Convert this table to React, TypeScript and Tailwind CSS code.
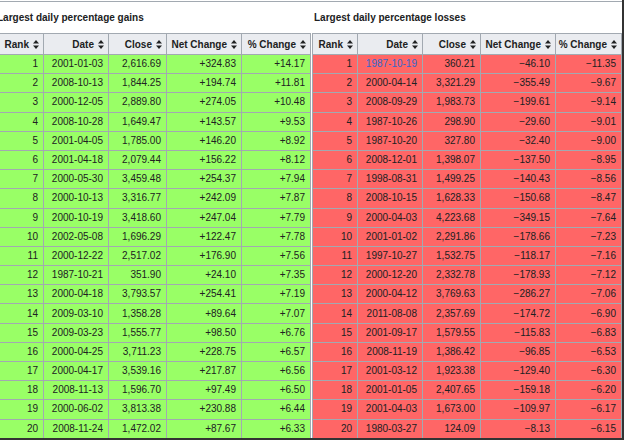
import React from "react";

type Row = [string, string, string, string, string];

const gains: Row[] = [
  ["1", "2001-01-03", "2,616.69", "+324.83", "+14.17"],
  ["2", "2008-10-13", "1,844.25", "+194.74", "+11.81"],
  ["3", "2000-12-05", "2,889.80", "+274.05", "+10.48"],
  ["4", "2008-10-28", "1,649.47", "+143.57", "+9.53"],
  ["5", "2001-04-05", "1,785.00", "+146.20", "+8.92"],
  ["6", "2001-04-18", "2,079.44", "+156.22", "+8.12"],
  ["7", "2000-05-30", "3,459.48", "+254.37", "+7.94"],
  ["8", "2000-10-13", "3,316.77", "+242.09", "+7.87"],
  ["9", "2000-10-19", "3,418.60", "+247.04", "+7.79"],
  ["10", "2002-05-08", "1,696.29", "+122.47", "+7.78"],
  ["11", "2000-12-22", "2,517.02", "+176.90", "+7.56"],
  ["12", "1987-10-21", "351.90", "+24.10", "+7.35"],
  ["13", "2000-04-18", "3,793.57", "+254.41", "+7.19"],
  ["14", "2009-03-10", "1,358.28", "+89.64", "+7.07"],
  ["15", "2009-03-23", "1,555.77", "+98.50", "+6.76"],
  ["16", "2000-04-25", "3,711.23", "+228.75", "+6.57"],
  ["17", "2000-04-17", "3,539.16", "+217.87", "+6.56"],
  ["18", "2008-11-13", "1,596.70", "+97.49", "+6.50"],
  ["19", "2000-06-02", "3,813.38", "+230.88", "+6.44"],
  ["20", "2008-11-24", "1,472.02", "+87.67", "+6.33"],
];

const losses: Row[] = [
  ["1", "1987-10-19", "360.21", "\u221246.10", "\u221211.35"],
  ["2", "2000-04-14", "3,321.29", "\u2212355.49", "\u22129.67"],
  ["3", "2008-09-29", "1,983.73", "\u2212199.61", "\u22129.14"],
  ["4", "1987-10-26", "298.90", "\u221229.60", "\u22129.01"],
  ["5", "1987-10-20", "327.80", "\u221232.40", "\u22129.00"],
  ["6", "2008-12-01", "1,398.07", "\u2212137.50", "\u22128.95"],
  ["7", "1998-08-31", "1,499.25", "\u2212140.43", "\u22128.56"],
  ["8", "2008-10-15", "1,628.33", "\u2212150.68", "\u22128.47"],
  ["9", "2000-04-03", "4,223.68", "\u2212349.15", "\u22127.64"],
  ["10", "2001-01-02", "2,291.86", "\u2212178.66", "\u22127.23"],
  ["11", "1997-10-27", "1,532.75", "\u2212118.17", "\u22127.16"],
  ["12", "2000-12-20", "2,332.78", "\u2212178.93", "\u22127.12"],
  ["13", "2000-04-12", "3,769.63", "\u2212286.27", "\u22127.06"],
  ["14", "2011-08-08", "2,357.69", "\u2212174.72", "\u22126.90"],
  ["15", "2001-09-17", "1,579.55", "\u2212115.83", "\u22126.83"],
  ["16", "2008-11-19", "1,386.42", "\u221296.85", "\u22126.53"],
  ["17", "2001-03-12", "1,923.38", "\u2212129.40", "\u22126.30"],
  ["18", "2001-01-05", "2,407.65", "\u2212159.18", "\u22126.20"],
  ["19", "2001-04-03", "1,673.00", "\u2212109.97", "\u22126.17"],
  ["20", "1980-03-27", "124.09", "\u22128.13", "\u22126.15"],
];

const headers = ["Rank", "Date", "Close", "Net Change", "% Change"];

function SortIcon() {
  return (
    <svg width="6" height="9" viewBox="0 0 6 9" className="shrink-0">
      <path d="M3 0 L6 3.6 L0 3.6 Z" fill="#202122" />
      <path d="M3 9 L6 5.4 L0 5.4 Z" fill="#202122" />
    </svg>
  );
}

function DataTable({
  title,
  rows,
  widths,
  bg,
  linkFirst,
  titleClass,
}: {
  title: string;
  rows: Row[];
  widths: number[];
  bg: "green" | "red";
  linkFirst?: boolean;
  titleClass: string;
}) {
  const rowBg = bg === "green" ? "bg-[#99ff66]" : "bg-[#ff6666]";
  return (
    <div className="flex flex-col shrink-0">
      <div
        className={`h-[33px] flex items-center pt-[1px] text-[10px] font-bold text-[#202122] whitespace-nowrap ${titleClass}`}
      >
        {title}
      </div>
      <table className="border-collapse table-fixed text-[10px] text-[#202122]">
        <colgroup>
          {widths.map((w, i) => (
            <col key={i} style={{ width: w }} />
          ))}
        </colgroup>
        <thead>
          <tr className="h-[21px]">
            {headers.map((h) => (
              <th
                key={h}
                className="border border-[#a2a9b1] bg-[#eaecf0] p-0 pr-[4px] font-bold"
              >
                <div className="flex items-center justify-end gap-[4px] whitespace-nowrap">
                  <span>{h}</span>
                  <SortIcon />
                </div>
              </th>
            ))}
          </tr>
        </thead>
        <tbody>
          {rows.map((r, ri) => (
            <tr key={ri} className={`h-[19.2px] ${rowBg}`}>
              {r.map((c, ci) => (
                <td
                  key={ci}
                  className={`border border-[#a2a9b1] p-0 pr-[5px] text-right whitespace-nowrap leading-[12px] ${
                    linkFirst && ri === 0 && ci === 1 ? "text-[#3366cc]" : ""
                  }`}
                >
                  {c}
                </td>
              ))}
            </tr>
          ))}
        </tbody>
      </table>
    </div>
  );
}

export default function App() {
  return (
    <div
      className="w-[625px] h-[441px] bg-white overflow-hidden relative"
      style={{ fontFamily: '"Liberation Sans", Arial, sans-serif' }}
    >
      <div className="absolute left-0 right-[3px] top-[1px] h-px bg-[#a2a9b1]" />
      <div className="w-[624px] h-[440px] border-r-2 border-b-2 border-[#333333] overflow-hidden">
        <div className="flex ml-[-3px] gap-[1px]">
          <DataTable
            title="Largest daily percentage gains"
            rows={gains}
            widths={[46, 65, 58, 75, 69]}
            bg="green"
            titleClass="pl-0"
          />
          <DataTable
            title="Largest daily percentage losses"
            rows={losses}
            widths={[45, 65, 58, 75, 66]}
            bg="red"
            linkFirst
            titleClass="pl-[2px]"
          />
        </div>
      </div>
    </div>
  );
}
